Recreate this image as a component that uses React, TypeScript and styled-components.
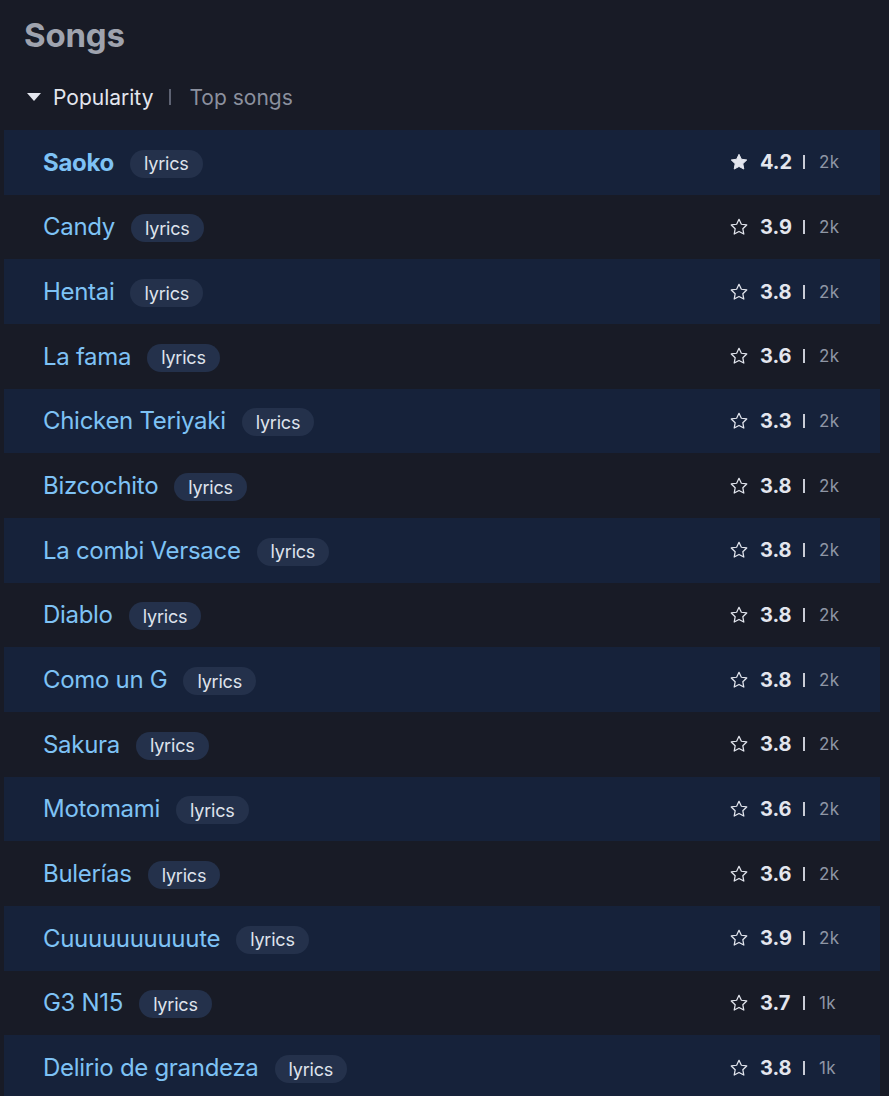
import React from "react";
import styled, { createGlobalStyle } from "styled-components";

const Global = createGlobalStyle`
  html, body { margin: 0; padding: 0; background: #181b26; }
  body { font-family: "Inter", "Lato", sans-serif; }
`;

const Page = styled.div`
  width: 889px;
  min-height: 1096px;
  background: #181b26;
  padding: 13px 9px 0 4px;
  box-sizing: border-box;
`;

const Title = styled.h2`
  margin: 0 0 0 20px;
  font-size: 33px;
  font-weight: 700;
  color: #9fa3ae;
  line-height: 44px;
  letter-spacing: -0.2px;
`;

const SortBar = styled.div`
  display: flex;
  align-items: center;
  height: 40px;
  margin: 20px 0 13px 23px;
  font-size: 21px;
`;

const SortLabel = styled.span`
  display: flex;
  align-items: center;
  gap: 12px;
  color: #e3e6ee;
`;

const Bar = styled.span<{ $color: string; $height: number; $left: number; $right: number }>`
  display: inline-block;
  width: 2px;
  height: ${(p) => p.$height}px;
  background: ${(p) => p.$color};
  margin: 0 ${(p) => p.$right}px 0 ${(p) => p.$left}px;
`;

const SubLabel = styled.span`
  color: #8b909e;
`;

const List = styled.div`
  display: flex;
  flex-direction: column;
`;

const Row = styled.div<{ $shaded: boolean }>`
  display: flex;
  align-items: center;
  justify-content: space-between;
  height: 64.67px;
  padding: 0 40px 0 39px;
  background: ${(p) => (p.$shaded ? "#16223a" : "transparent")};
`;

const Left = styled.div`
  display: flex;
  align-items: center;
  gap: 16px;
`;

const SongName = styled.span<{ $bold: boolean }>`
  color: #7ec2f5;
  font-size: 24px;
  letter-spacing: -0.3px;
  font-weight: ${(p) => (p.$bold ? 700 : 400)};
`;

const Badge = styled.span`
  display: inline-flex;
  align-items: center;
  height: 28px;
  padding: 0 14px;
  border-radius: 14px;
  background: #24314b;
  color: #dfe3ec;
  font-size: 18px;
  letter-spacing: -0.2px;
  margin-top: 3px;
`;

const Right = styled.div`
  display: flex;
  align-items: center;
`;

const Rating = styled.span`
  margin-left: 11px;
  min-width: 33px;
  color: #e3e6ee;
  font-size: 20px;
  font-weight: 700;
`;

const Count = styled.span`
  color: #8f96a5;
  font-size: 17px;
  letter-spacing: 0.3px;
  min-width: 21px;
`;

const Star = ({ filled }: { filled: boolean }) => (
  <svg width="20" height="20" viewBox="0 0 24 24">
    <path
      d="M12 2.8l2.85 5.9 6.45.85-4.72 4.5 1.18 6.4L12 17.35 6.24 20.45l1.18-6.4L2.7 9.55l6.45-.85z"
      fill={filled ? "#e3e6ee" : "none"}
      stroke="#e3e6ee"
      strokeWidth={filled ? 1.2 : 1.5}
      strokeLinejoin="round"
    />
  </svg>
);

const Caret = () => (
  <svg width="14" height="8" viewBox="0 0 14 8">
    <path d="M0 0h14L7 8z" fill="#e3e6ee" />
  </svg>
);

const songs: [string, string, string][] = [
  ["Saoko", "4.2", "2k"],
  ["Candy", "3.9", "2k"],
  ["Hentai", "3.8", "2k"],
  ["La fama", "3.6", "2k"],
  ["Chicken Teriyaki", "3.3", "2k"],
  ["Bizcochito", "3.8", "2k"],
  ["La combi Versace", "3.8", "2k"],
  ["Diablo", "3.8", "2k"],
  ["Como un G", "3.8", "2k"],
  ["Sakura", "3.8", "2k"],
  ["Motomami", "3.6", "2k"],
  ["Bulerías", "3.6", "2k"],
  ["Cuuuuuuuuuute", "3.9", "2k"],
  ["G3 N15", "3.7", "1k"],
  ["Delirio de grandeza", "3.8", "1k"],
];

export default function App() {
  return (
    <Page>
      <Global />
      <Title>Songs</Title>
      <SortBar>
        <SortLabel>
          <Caret />
          Popularity
        </SortLabel>
        <Bar $color="#5d6272" $height={16} $left={16} $right={18} />
        <SubLabel>Top songs</SubLabel>
      </SortBar>
      <List>
        {songs.map(([name, rating, count], i) => (
          <Row key={name} $shaded={i % 2 === 0}>
            <Left>
              <SongName $bold={i === 0}>{name}</SongName>
              <Badge>lyrics</Badge>
            </Left>
            <Right>
              <Star filled={i === 0} />
              <Rating>{rating}</Rating>
              <Bar $color="#c9ccd6" $height={14} $left={10} $right={14} />
              <Count>{count}</Count>
            </Right>
          </Row>
        ))}
      </List>
    </Page>
  );
}
